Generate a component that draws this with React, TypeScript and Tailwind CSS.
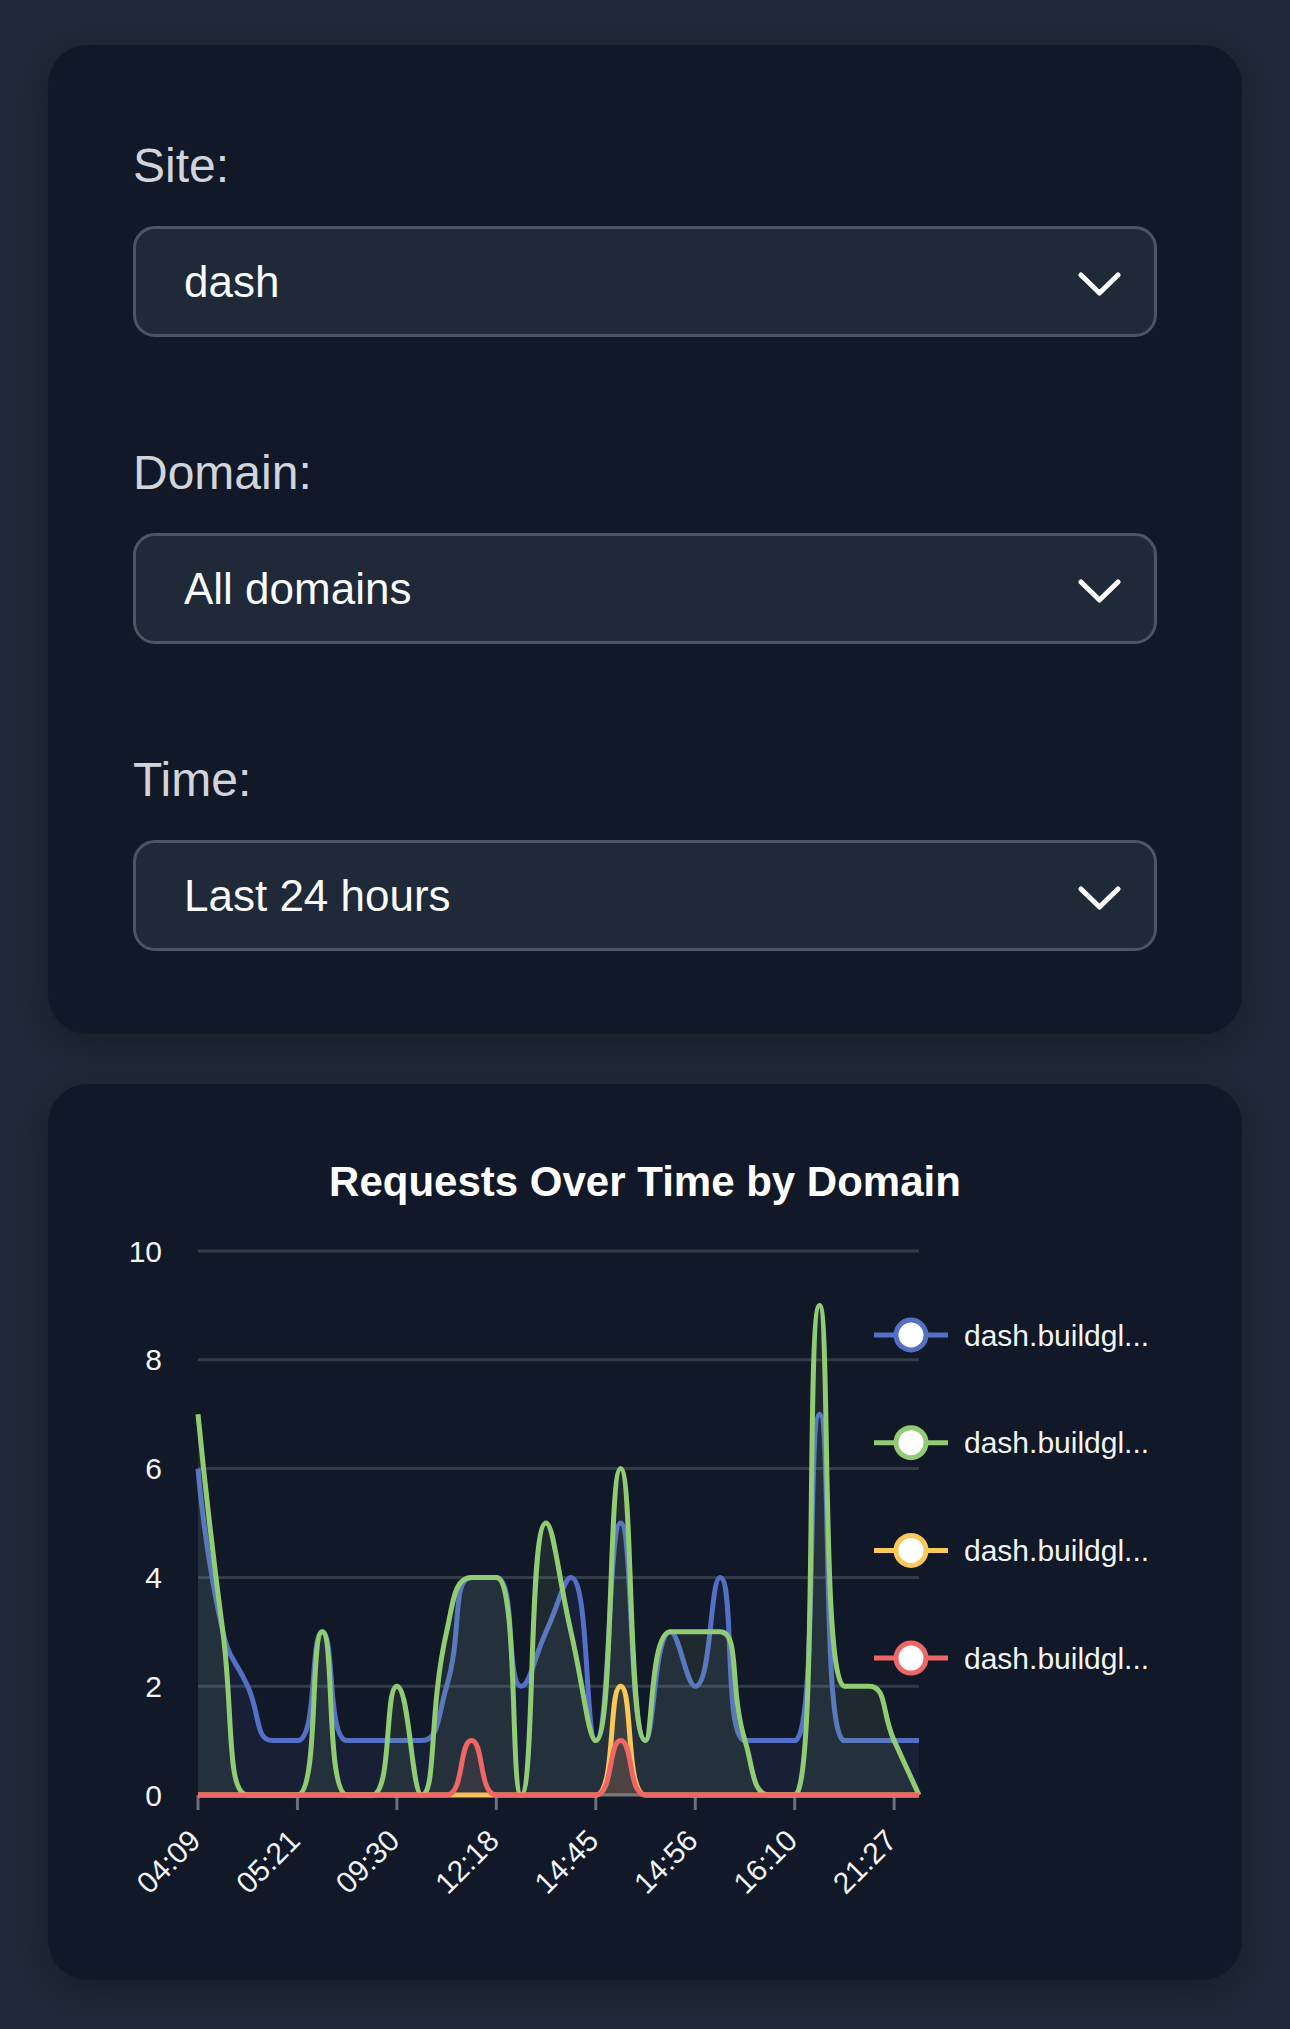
import { useMemo } from 'react'

const font = { fontFamily: '"Liberation Sans", Arial, Helvetica, sans-serif' }

const labels = ['04:09', '05:21', '09:30', '12:18', '14:45', '14:56', '16:10', '21:27']

const zeros = () => Array.from({ length: 30 }, () => 0)

const yellowData = zeros()
yellowData[17] = 2
const redData = zeros()
redData[11] = 1
redData[17] = 1

const series = [
	{
		name: 'dash.buildgl...',
		color: '#5470c6',
		data: [6, 3, 2, 1, 1, 3, 1, 1, 1, 1, 2, 4, 4, 2, 3, 4, 1, 5, 1, 3, 2, 4, 1, 1, 1, 7, 1, 1, 1, 1],
	},
	{
		name: 'dash.buildgl...',
		color: '#91cc75',
		data: [7, 3, 0, 0, 0, 3, 0, 0, 2, 0, 3, 4, 4, 0, 5, 3, 1, 6, 1, 3, 3, 3, 1, 0, 0, 9, 2, 2, 1, 0],
	},
	{ name: 'dash.buildgl...', color: '#fac858', data: yellowData },
	{ name: 'dash.buildgl...', color: '#ee6666', data: redData },
]

// plot box, in svg coordinates
const X0 = 150
const X1 = 871
const ZERO = 585
const UNIT = 54.4
const STEP = (X1 - X0) / 29

const clamp = (v: number, a: number, b: number) => Math.min(Math.max(v, Math.min(a, b)), Math.max(a, b))

// same idea as echarts' smooth line: control points kept inside each segment's box
function smoothPath(pts: [number, number][], smooth = 0.5) {
	let d = `M${pts[0][0]},${pts[0][1]}`
	let c0x = pts[0][0]
	let c0y = pts[0][1]
	for (let i = 1; i < pts.length; i++) {
		const [x, y] = pts[i]
		const [px, py] = pts[i - 1]
		let c1x = x
		let c1y = y
		let nx0 = x
		let ny0 = y
		if (i < pts.length - 1) {
			const [nx, ny] = pts[i + 1]
			const lp = Math.hypot(x - px, y - py)
			const ln = Math.hypot(nx - x, ny - y)
			const r = ln / (ln + lp)
			nx0 = clamp(x + (nx - px) * smooth * r, nx, x)
			ny0 = clamp(y + (ny - py) * smooth * r, ny, y)
			c1x = clamp(x - ((nx0 - x) * lp) / ln, px, x)
			c1y = clamp(y - ((ny0 - y) * lp) / ln, py, y)
			nx0 = x + ((x - c1x) * ln) / lp
			ny0 = y + ((y - c1y) * ln) / lp
		}
		d += ` C${c0x},${c0y} ${c1x},${c1y} ${x},${y}`
		c0x = nx0
		c0y = ny0
	}
	return d
}

function Chart() {
	const paths = useMemo(
		() =>
			series.map((s) => {
				const pts = s.data.map((v, i) => [X0 + i * STEP, ZERO - v * UNIT] as [number, number])
				const line = smoothPath(pts)
				return { line, area: `${line} L${X1},${ZERO} L${X0},${ZERO} Z`, color: s.color }
			}),
		[],
	)

	return (
		<svg width="1194" height="689" viewBox="0 0 1194 689" className="block" style={font}>
			{[0, 2, 4, 6, 8, 10].map((v) => (
				<g key={v}>
					<line x1={X0} x2={X1} y1={ZERO - v * UNIT} y2={ZERO - v * UNIT} stroke="#343b48" strokeWidth="3" />
					<text x="114" y={ZERO - v * UNIT} textAnchor="end" dominantBaseline="central" fill="#f3f4f6" fontSize="30">
						{v}
					</text>
				</g>
			))}

			<line x1={X0} x2={X1} y1={ZERO} y2={ZERO} stroke="#6e7079" strokeWidth="3" />
			{labels.map((l, k) => {
				const x = X0 + k * 4 * STEP
				const ax = x - 3
				const ay = ZERO + 40
				return (
					<g key={l}>
						<line x1={x} x2={x} y1={ZERO} y2={ZERO + 15} stroke="#6e7079" strokeWidth="3" />
						<text
							x={ax}
							y={ay}
							transform={`rotate(-45 ${ax} ${ay})`}
							textAnchor="end"
							dominantBaseline="central"
							fill="#f3f4f6"
							fontSize="30"
						>
							{l}
						</text>
					</g>
				)
			})}

			{paths.map((p, i) => (
				<g key={i}>
					<path d={p.area} fill={p.color} fillOpacity="0.1" />
					<path d={p.line} fill="none" stroke={p.color} strokeWidth="5" strokeLinejoin="round" />
				</g>
			))}

			{series.map((s, i) => {
				const y = 125 + i * 107.7
				return (
					<g key={i}>
						<line x1="826" x2="900" y1={y} y2={y} stroke={s.color} strokeWidth="5" />
						<circle cx="863" cy={y} r="15" fill="#ffffff" stroke={s.color} strokeWidth="5" />
						<text x="916" y={y} dominantBaseline="central" fill="#f3f4f6" fontSize="30">
							{s.name}
						</text>
					</g>
				)
			})}
		</svg>
	)
}

function Field({ label, value, first }: { label: string; value: string; first?: boolean }) {
	return (
		<div className={first ? '' : 'mt-[100px]'}>
			<label className="block text-[48px] leading-[72px] text-[#d1d5db] mb-[24px]">{label}</label>
			<div className="relative">
				<select
					defaultValue={value}
					className="appearance-none w-full h-[111px] rounded-[22px] border-[3px] border-[#4b5563] bg-[#1f2937] pl-[48px] pr-[100px] text-[44px] text-[#f9fafb] outline-none"
					style={font}
				>
					<option value={value}>{value}</option>
				</select>
				<svg
					className="absolute right-[36px] top-[46px] pointer-events-none"
					width="43"
					height="24"
					viewBox="0 0 43 24"
				>
					<polyline
						points="3,3 21.5,21 40,3"
						fill="none"
						stroke="#ffffff"
						strokeWidth="5"
						strokeLinecap="round"
						strokeLinejoin="round"
					/>
				</svg>
			</div>
		</div>
	)
}

export default function App() {
	return (
		<div className="min-h-screen bg-[#1f2937] px-[48px] pt-[45px] pb-[49px]" style={font}>
			<div className="rounded-[40px] bg-[#111827] px-[85px] pt-[85px] pb-[83px] shadow-[0_10px_30px_rgba(0,0,0,0.25)]">
				<Field label="Site:" value="dash" first />
				<Field label="Domain:" value="All domains" />
				<Field label="Time:" value="Last 24 hours" />
			</div>

			<div className="mt-[50px] rounded-[40px] bg-[#111827] pt-[70px] pb-[81px] shadow-[0_10px_30px_rgba(0,0,0,0.25)]">
				<h2 className="text-center text-[42px] leading-[56px] font-bold text-white">
					Requests Over Time by Domain
				</h2>
				<Chart />
			</div>
		</div>
	)
}
